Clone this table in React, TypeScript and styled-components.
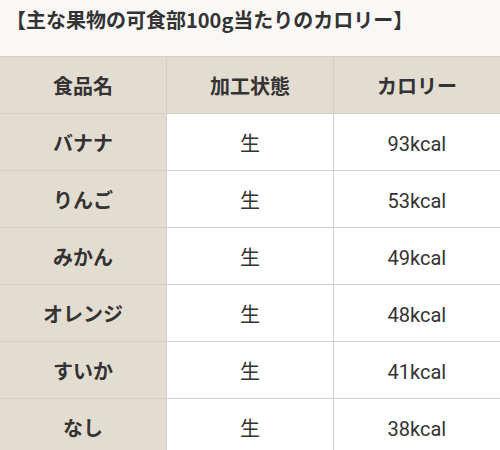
import styled, { createGlobalStyle } from 'styled-components'

const GlobalStyle = createGlobalStyle`
  html, body {
    margin: 0;
    padding: 0;
    background: #f9f8f6;
  }
  body {
    font-family: "Noto Sans CJK JP", "Noto Sans", sans-serif;
    color: #333;
  }
`

const Page = styled.div`
  width: 500px;
  height: 450px;
  overflow: hidden;
`

const Title = styled.h2`
  margin: 0;
  padding: 6px 0 0 6px;
  height: 56px;
  box-sizing: border-box;
  font-size: 20px;
  font-weight: 700;
  line-height: 28px;
  color: #333;
  white-space: nowrap;
`

const Table = styled.table`
  width: 500px;
  border-collapse: collapse;
  table-layout: fixed;
`

const Cell = styled.td<{ $head?: boolean }>`
  height: 56px;
  padding: 0;
  border: 1px solid #d3cfc9;
  background: ${(p) => (p.$head ? '#e3dcd0' : '#ffffff')};
  text-align: center;
  font-size: 20px;
  font-weight: ${(p) => (p.$head ? 700 : 400)};
  color: #333;
  &:first-child {
    border-left: none;
  }
  &:last-child {
    border-right: none;
  }
`

const Kcal = styled.span`
  font-family: Roboto, "Noto Sans CJK JP", sans-serif;
  font-size: 20px;
`

const rows = [
  ['バナナ', '93kcal'],
  ['りんご', '53kcal'],
  ['みかん', '49kcal'],
  ['オレンジ', '48kcal'],
  ['すいか', '41kcal'],
  ['なし', '38kcal'],
]

const App: React.FC = () => (
  <Page>
    <GlobalStyle />
    <Title>【主な果物の可食部100g当たりのカロリー】</Title>
    <Table>
      <tbody>
        <tr>
          <Cell as="th" $head>食品名</Cell>
          <Cell as="th" $head>加工状態</Cell>
          <Cell as="th" $head>カロリー</Cell>
        </tr>
        {rows.map(([name, kcal]) => (
          <tr key={name}>
            <Cell $head>{name}</Cell>
            <Cell>生</Cell>
            <Cell>
              <Kcal>{kcal}</Kcal>
            </Cell>
          </tr>
        ))}
      </tbody>
    </Table>
  </Page>
)

export default App
